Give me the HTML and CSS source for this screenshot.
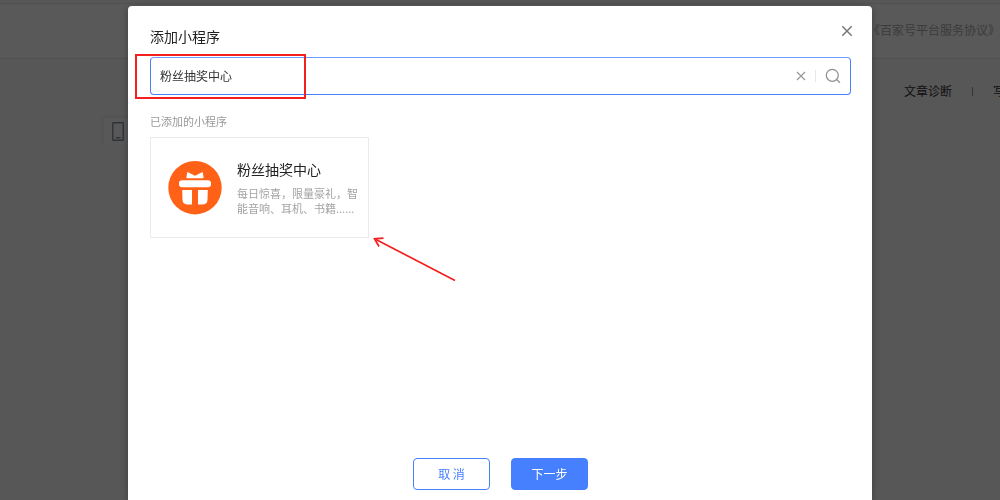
FILE: index.html
```html
<!DOCTYPE html>
<html lang="zh-CN">
<head>
<meta charset="utf-8">
<title>添加小程序</title>
<link rel="stylesheet" href="styles.css">
</head>
<body>
<div class="page">
  <div class="page-strip"></div>
  <header class="page-header"><a class="agreement" href="#">《百家号平台服务协议》</a></header>
  <nav class="page-tools">
    <a class="tool" href="#">文章诊断</a>
    <span class="tool-divider"></span>
    <a class="tool" href="#">写作助手</a>
  </nav>
  <div class="preview">
    <svg width="12" height="19" viewBox="0 0 12 19" fill="none" stroke="#8890a4" stroke-width="1.4"><rect x=".8" y=".8" width="10.4" height="17.4" rx=".5"/><path d="M4 15.7h4.5"/></svg>
  </div>
</div>

<div class="overlay">
  <section class="modal" role="dialog" aria-labelledby="modal-title">
    <header class="modal-header">
      <h1 class="modal-title" id="modal-title">添加小程序</h1>
      <button class="icon-button" type="button" aria-label="关闭">
        <svg width="12" height="12" viewBox="0 0 12 12" fill="none" stroke="#777" stroke-width="1.5"><path d="M1.300 1.300l9.400 9.400M10.700 1.300l-9.400 9.400"/></svg>
      </button>
    </header>

    <div class="search">
      <input class="search-input" type="text" aria-label="搜索小程序" value="粉丝抽奖中心">
      <button class="icon-button" type="button" aria-label="清空">
        <svg width="10" height="10" viewBox="0 0 10 10" fill="none" stroke="#999" stroke-width="1.2"><path d="M1 1l8 8M9 1L1 9"/></svg>
      </button>
      <span class="search-divider"></span>
      <button class="icon-button" type="button" aria-label="搜索">
        <svg width="16" height="16" viewBox="0 0 16 16" fill="none" stroke="#8f8f8f" stroke-width="1.2"><circle cx="7.300" cy="7.300" r="6"/><path d="M11.500 11.500l3.500 3.200"/></svg>
      </button>
      <span class="highlight"></span>
    </div>

    <h2 class="section-label">已添加的小程序</h2>
    <article class="card">
      <svg class="card-icon" width="54" height="54" viewBox="0 0 54 54">
        <circle cx="27" cy="26.700" r="26.700" fill="#ff6117"/>
        <g fill="#fff">
          <path d="M19.200 11.500Q19.300 10.800 20 11.200L27 14.800l7-3.600q.7-.4.8.3l.8 4.800q.1.900-.8.900H19.200q-.9 0-.8-.9z"/>
          <rect x="11" y="19.200" width="32" height="7" rx="3"/>
          <path d="M14.200 29H24v14.400h-4.900q-4.300 0-4.600-4.300zM30 29h9.800l-.3 10.100q-.3 4.300-4.600 4.300H30z"/>
        </g>
      </svg>
      <div class="card-body">
        <h3 class="card-title">粉丝抽奖中心</h3>
        <p class="card-text">每日惊喜，限量豪礼，智<br>能音响、耳机、书籍......</p>
      </div>
      <svg class="arrow" width="86" height="48" viewBox="0 0 86 48" fill="none" stroke="#f4201f" stroke-width="1.700"><path d="M82 43.500L3 2.500"/><path d="M10.500 1.200L1.500 1.800L6 9.500"/></svg>
    </article>

    <footer class="modal-footer">
      <button class="button" type="button">取 消</button>
      <button class="button button-primary" type="button">下一步</button>
    </footer>
  </section>
</div>
</body>
</html>
```
FILE: styles.css
```css
* {
  box-sizing: border-box;
}

body {
  margin: 0;
  overflow: hidden;
  background: #f8f8f8;
  color: #222;
  font-family: "Noto Sans CJK SC", sans-serif;
  font-size: 12px;
  font-weight: 400;
  line-height: 16px;
}

h1, h2, h3, p {
  margin: 0;
  font-weight: 400;
}

a {
  color: inherit;
  text-decoration: none;
}

button, input {
  padding: 0;
  border: 0;
  background: none;
  font: inherit;
  color: inherit;
}

svg {
  display: block;
}

.page-strip {
  height: 4px;
  border-bottom: 1px solid #e6e6e6;
}

.page-header {
  display: flex;
  align-items: center;
  justify-content: flex-end;
  height: 55px;
  padding-bottom: 2px;
  border-bottom: 1px solid #e8e8e8;
  background: #fff;
}

.agreement {
  color: #aaa;
}

.page-tools {
  display: flex;
  align-items: center;
  justify-content: flex-end;
  gap: 20px;
  height: 64px;
  margin-right: -41px;
  color: #333;
  white-space: nowrap;
}

.tool-divider {
  width: 1px;
  height: 9px;
  background: #999;
}

.preview {
  display: flex;
  align-items: center;
  width: 60px;
  height: 26px;
  margin: -5px 0 0 104px;
  padding-left: 8px;
  background: #fbfbfb;
  box-shadow: 0 0 4px #ddd;
}

.overlay {
  position: fixed;
  inset: 0;
  display: flex;
  justify-content: center;
  padding-top: 6px;
  background: rgba(0, 0, 0, 0.65);
}

.modal {
  display: flex;
  flex-direction: column;
  width: 744px;
  padding: 12px 21px 10px 22px;
  border-radius: 4px 4px 0 0;
  background: #fff;
  box-shadow: 0 2px 8px rgba(0, 0, 0, 0.3);
}

.modal-header {
  display: flex;
  align-items: flex-start;
  justify-content: space-between;
  height: 39px;
  margin-right: -2px;
}

.modal-header .icon-button {
  margin-top: 7px;
}

.modal-title {
  margin-top: 8px;
  font-size: 14px;
  line-height: 20px;
}

.icon-button {
  flex: none;
  cursor: pointer;
}

.search {
  position: relative;
  display: flex;
  align-items: center;
  height: 38px;
  padding: 0 9px;
  border: 1px solid #4780ff;
  border-top-color: #6e9bff;
  border-radius: 4px;
}

.search-input {
  flex: 1;
  min-width: 0;
  height: 34px;
  padding-bottom: 2px;
  color: #333;
  outline: none;
}

.search-divider {
  width: 1px;
  height: 12px;
  margin: 0 9px;
  background: #e8e8e8;
}

.highlight {
  position: absolute;
  top: -4px;
  left: -16px;
  width: 171px;
  height: 45px;
  border: 2px solid #f4201f;
  pointer-events: none;
}

.section-label {
  margin: 18px 0 8px;
  color: #999;
  font-size: 11px;
  line-height: 16px;
}

.card {
  position: relative;
  display: flex;
  align-items: center;
  gap: 15px;
  width: 219px;
  height: 101px;
  padding: 0 0 0 17px;
  border: 1px solid #ebebeb;
}

.card-icon {
  flex: none;
}

.card-body {
  padding-bottom: 1px;
  white-space: nowrap;
}

.card-title {
  margin-bottom: 7px;
  font-size: 14px;
  line-height: 20px;
}

.card-text {
  color: #a3a3a3;
  font-size: 11px;
  line-height: 15px;
}

.arrow {
  position: absolute;
  top: 99px;
  left: 222px;
}

.modal-footer {
  display: flex;
  justify-content: center;
  gap: 21px;
  margin-top: auto;
}

.button {
  width: 77px;
  height: 32px;
  border: 1px solid #4780ff;
  border-radius: 4px;
  color: #4780ff;
  cursor: pointer;
}

.button-primary {
  background: #4780ff;
  color: #fff;
}
```
